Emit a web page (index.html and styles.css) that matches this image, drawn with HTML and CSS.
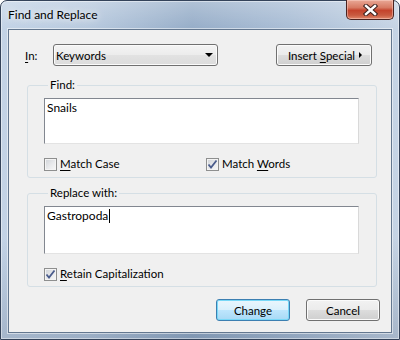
FILE: index.html
```html
<!DOCTYPE html>
<html lang="en">
<head>
  <meta charset="UTF-8" />
  <title>Find and Replace</title>
  <link rel="stylesheet" href="styles.css">
</head>
<body>

  <div class="window">
    <div class="titlebar">
      <span class="title">Find and Replace</span>
      <button class="btn-close" aria-label="Close">
        <svg width="15" height="12" viewBox="0 0 15 12">
          <path d="M3 2 L12 10 M12 2 L3 10" stroke="#3b1f1c" stroke-width="4.4" stroke-linecap="square" />
          <path d="M3 2 L12 10 M12 2 L3 10" stroke="#ffffff" stroke-width="2.4" stroke-linecap="square" />
        </svg>
      </button>
    </div>

    <div class="client">
      <div class="row-in">
        <span class="lbl-in"><u>I</u>n:</span>
        <div class="combo">
          <span>Keywords</span>
          <span class="combo-arrow"></span>
        </div>
        <button class="btn btn-special"><span>Insert <u>S</u>pecial</span><span class="arrow-right"></span></button>
      </div>

      <fieldset class="group">
        <legend>Find:</legend>
        <div class="textbox tb-find">Snails</div>
        <div class="checks">
          <label class="check check-first"><span class="box"></span><span><u>M</u>atch Case</span></label>
          <label class="check"><span class="box">
            <svg width="11" height="11" viewBox="0 0 11 11"><path d="M1.5 5.5 L4 8.5 L9.5 1.5" fill="none" stroke="#4a5c8c" stroke-width="1.8" /></svg>
          </span><span>Match <u>W</u>ords</span></label>
        </div>
      </fieldset>

      <fieldset class="group group-replace">
        <legend>Replace with:</legend>
        <div class="textbox tb-replace">Gastropoda<span class="caret"></span></div>
        <div class="checks">
          <label class="check"><span class="box">
            <svg width="11" height="11" viewBox="0 0 11 11"><path d="M1.5 5.5 L4 8.5 L9.5 1.5" fill="none" stroke="#4a5c8c" stroke-width="1.8" /></svg>
          </span><span><u>R</u>etain Capitalization</span></label>
        </div>
      </fieldset>

      <div class="actions">
        <button class="btn btn-default">Change</button>
        <button class="btn">Cancel</button>
      </div>
    </div>
  </div>

</body>
</html>
```

FILE: styles.css
```css
/* Base */
* {
  box-sizing: border-box;
}

body {
  margin: 0;
  background: #ffffff;
  font-family: 'Lato', 'Noto Sans', sans-serif;
  font-size: 11.5px;
  color: #000000;
}

u {
  text-decoration: underline;
  text-underline-offset: 2px;
}

/* Window frame */
.window {
  width: 400px;
  height: 340px;
  border: 1px solid #34435a;
  border-radius: 7px 7px 0 0;
  background:
    linear-gradient(180deg, rgba(255,255,255,0.25) 0, rgba(255,255,255,0) 28px, rgba(30,50,80,0) 70%, rgba(30,50,80,0.18) 100%),
    linear-gradient(90deg, #c3d3e6 0%, #b7c9de 22%, #96adc8 48%, #a9bdd5 72%, #c6d4e5 100%);
  box-shadow: inset 0 0 0 1px rgba(255,255,255,0.45);
  display: flex;
  flex-direction: column;
}

.titlebar {
  height: 28px;
  display: flex;
  align-items: flex-start;
  padding-left: 7px;
}

.title {
  margin-top: 6px;
  font-size: 12px;
  line-height: 16px;
  text-shadow: 0 0 6px rgba(255,255,255,0.9), 0 0 12px rgba(255,255,255,0.8);
}

.btn-close {
  margin-left: auto;
  margin-right: 5px;
  margin-top: -1px;
  width: 48px;
  height: 20px;
  padding: 0;
  border: 1px solid #4a2320;
  border-top: none;
  border-radius: 0 0 5px 5px;
  background: linear-gradient(180deg, #e9a896 0%, #d77a63 40%, #c4432c 55%, #c85a40 80%, #e0876b 100%);
  box-shadow: inset 0 0 0 1px rgba(255,220,210,0.45);
  display: flex;
  align-items: center;
  justify-content: center;
}

/* Client area */
.client {
  flex: 1;
  margin: 0 7px 6px;
  border: 1px solid #63778f;
  background: #f0f0f0;
  box-shadow: 0 0 0 1px rgba(255,255,255,0.5);
  display: flex;
  flex-direction: column;
}

.row-in {
  display: flex;
  align-items: center;
  margin-top: 14px;
  padding-left: 16px;
  padding-right: 19px;
}

.lbl-in {
  width: 28px;
}

.combo {
  width: 165px;
  height: 22px;
  border: 1px solid #707070;
  border-radius: 3px;
  background: linear-gradient(180deg, #f4f4f4 0%, #ececec 50%, #e2e2e2 50%, #dcdcdc 100%);
  box-shadow: inset 0 0 0 1px #fbfbfb;
  display: flex;
  align-items: center;
  padding: 0 4px 0 2px;
}

.combo-arrow {
  margin-left: auto;
  width: 0;
  height: 0;
  border-left: 4px solid transparent;
  border-right: 4px solid transparent;
  border-top: 4px solid #000000;
}

.btn {
  font-family: inherit;
  font-size: 11.5px;
  color: #000000;
  height: 22px;
  padding: 0;
  border: 1px solid #707070;
  border-radius: 3px;
  background: linear-gradient(180deg, #f2f2f2 0%, #ebebeb 50%, #dddddd 50%, #cfcfcf 100%);
  box-shadow: inset 0 0 0 1px #fbfbfb;
  display: flex;
  align-items: center;
  justify-content: center;
}

.btn-special {
  margin-left: auto;
  width: 96px;
  gap: 4px;
  padding-left: 2px;
}

.arrow-right {
  width: 0;
  height: 0;
  border-top: 3px solid transparent;
  border-bottom: 3px solid transparent;
  border-left: 3px solid #000000;
}

/* Group boxes */
.group {
  margin: 11px 14px 0 18px;
  padding: 5px 0 5px 16px;
  border: 1px solid #d5dfe5;
  border-radius: 3px;
}

.group legend {
  margin-left: 4px;
  padding: 0 2px;
  line-height: 16px;
}

.group-replace {
  margin-top: 7px;
  padding-bottom: 4px;
}

.textbox {
  width: 315px;
  height: 46px;
  padding: 1px 2px;
  font-size: 12px;
  line-height: 16px;
  background: #ffffff;
  border: 1px solid;
  border-color: #828790 #d9d9d9 #e3e3e3 #828790;
}

.tb-replace {
  height: 48px;
}

.caret {
  display: inline-block;
  width: 1px;
  height: 14px;
  margin-left: 1px;
  vertical-align: -3px;
  background: #000000;
}

.checks {
  display: flex;
  margin-top: 12px;
  line-height: 16px;
}

.check {
  display: flex;
  align-items: center;
  gap: 3px;
}

.check-first {
  width: 162px;
}

.box {
  width: 13px;
  height: 13px;
  border: 1px solid #8e8f8f;
  background: linear-gradient(135deg, #cfd3d8 0%, #e9eaec 55%, #f8f8f8 100%);
  box-shadow: inset 0 0 0 1px #f4f4f4;
  display: flex;
  align-items: center;
  justify-content: center;
}

/* Bottom buttons */
.actions {
  display: flex;
  justify-content: flex-end;
  gap: 16px;
  margin-top: 12px;
  padding-right: 11px;
}

.actions .btn {
  width: 74px;
}

.btn-default {
  border-color: #3c7fb1;
  background: linear-gradient(180deg, #eaf6fd 0%, #d9f0fc 50%, #bee6fd 50%, #a7d9f5 100%);
  box-shadow: inset 0 0 0 1px #78d8f7;
}
```
